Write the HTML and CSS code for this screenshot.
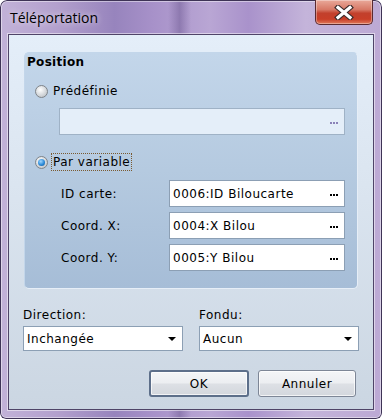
FILE: index.html
```html
<!DOCTYPE html>
<html lang="fr">
<head>
    <meta charset="UTF-8">
    <title>Téléportation</title>
    <link rel="stylesheet" href="styles.css">
</head>
<body>
    <div class="window">
        <div class="titlebar">
            <span class="title">Téléportation</span>
            <button class="close-btn" title="Fermer">
                <svg width="22" height="15" viewBox="0 0 22 15">
                    <path d="M5 2.5 L17 12.5 M17 2.5 L5 12.5" stroke="#3a2a2a" stroke-width="5.5" stroke-linecap="square"/>
                    <path d="M5 2.5 L17 12.5 M17 2.5 L5 12.5" stroke="#ffffff" stroke-width="3.2" stroke-linecap="square"/>
                </svg>
            </button>
        </div>

        <div class="client">
            <div class="group">
                <div class="group-title">Position</div>

                <label class="radio-row">
                    <span class="radio"></span>
                    <span class="radio-text">Prédéfinie</span>
                </label>
                <div class="field field-disabled predef">
                    <span class="field-value"></span>
                    <span class="dots"></span>
                </div>

                <label class="radio-row">
                    <span class="radio checked"></span>
                    <span class="radio-text focused">Par variable</span>
                </label>

                <div class="var-rows">
                    <div class="var-row">
                        <span class="var-label">ID carte:</span>
                        <div class="field">
                            <span class="field-value">0006:ID Biloucarte</span>
                            <span class="dots"></span>
                        </div>
                    </div>
                    <div class="var-row">
                        <span class="var-label">Coord. X:</span>
                        <div class="field">
                            <span class="field-value">0004:X Bilou</span>
                            <span class="dots"></span>
                        </div>
                    </div>
                    <div class="var-row">
                        <span class="var-label">Coord. Y:</span>
                        <div class="field">
                            <span class="field-value">0005:Y Bilou</span>
                            <span class="dots"></span>
                        </div>
                    </div>
                </div>
            </div>

            <div class="options">
                <div class="option">
                    <span class="option-label">Direction:</span>
                    <div class="select">
                        <span>Inchangée</span>
                        <span class="arrow"></span>
                    </div>
                </div>
                <div class="option">
                    <span class="option-label">Fondu:</span>
                    <div class="select">
                        <span>Aucun</span>
                        <span class="arrow"></span>
                    </div>
                </div>
            </div>

            <div class="actions">
                <button class="btn btn-default">OK</button>
                <button class="btn">Annuler</button>
            </div>
        </div>
    </div>
</body>
</html>
```

FILE: styles.css
```css
body {
    margin: 0;
    padding: 0;
    background: #ffffff;
    font-family: 'DejaVu Sans', Verdana, sans-serif;
    font-size: 12px;
    color: #000000;
}

.window {
    width: 382px;
    height: 419px;
    box-sizing: border-box;
    padding: 0 8px 9px 8px;
    border-radius: 7px 7px 6px 6px;
    background:
        linear-gradient(90deg, rgba(255,255,255,0) 0%, rgba(255,255,255,0) 44%, rgba(80,60,120,0.35) 47%, rgba(255,255,255,0) 50%, rgba(255,255,255,0) 100%),
        linear-gradient(90deg, #c2b2d8 0%, #b3a0cd 15%, #9784bd 30%, #a791c9 40%, #b9a6d4 55%, #a992cb 65%, #c4b4da 80%, #bca9d4 100%);
    box-shadow: inset 0 0 0 1px #3e3356, inset 0 0 0 2px rgba(255,255,255,0.45);
}

.titlebar {
    height: 34px;
    display: flex;
    align-items: flex-start;
}

.title {
    margin: 9px 0 0 2px;
    font-family: 'Open Sans', 'Noto Sans', sans-serif;
    font-size: 14px;
    line-height: 18px;
    color: #000000;
    text-shadow: 0 0 6px rgba(255,255,255,0.8);
}

.close-btn {
    margin-left: auto;
    margin-right: 1px;
    width: 58px;
    height: 25px;
    padding: 0;
    border: 1px solid #5a2a30;
    border-top: none;
    border-radius: 0 0 5px 5px;
    background: linear-gradient(180deg, #e9a99a 0%, #d77866 40%, #c2402c 55%, #c83e28 80%, #e07a5c 100%);
    box-shadow: inset 0 0 0 1px rgba(255,255,255,0.35);
    display: flex;
    justify-content: center;
    align-items: center;
}

.client {
    height: 376px;
    box-sizing: border-box;
    border: 1px solid #4f4468;
    padding: 17px 15px 0 15px;
    background: linear-gradient(180deg, #e4eef9 0%, #dbe5f0 40%, #cbd6e2 100%);
    box-shadow: 0 0 0 1px rgba(255,255,255,0.5);
}

.group {
    height: 237px;
    box-sizing: border-box;
    border: 1px solid #c3d6ea;
    border-right-color: #e6eef7;
    border-bottom-color: #e6eef7;
    border-radius: 5px;
    padding: 1px 0 17px 0;
    background: linear-gradient(180deg, #c3d6ea 0%, #b5cae0 50%, #a6bdd7 100%);
    display: flex;
    flex-direction: column;
}

.group-title {
    margin-left: 2px;
    font-weight: bold;
    line-height: 16px;
    letter-spacing: 0.3px;
}

.radio-row {
    display: flex;
    align-items: center;
    height: 18px;
    margin-top: 12px;
    margin-left: 10px;
}

.radio-row + .field {
    margin-top: 8px;
}

.field + .radio-row {
    margin-top: 18px;
}

.radio {
    width: 11px;
    height: 11px;
    border-radius: 50%;
    border: 1px solid #7f8489;
    background: radial-gradient(circle at 40% 35%, #ffffff 0%, #dcdfe2 45%, #b4b9be 100%);
    position: relative;
}

.radio.checked::after {
    content: "";
    position: absolute;
    left: 2px;
    top: 2px;
    width: 7px;
    height: 7px;
    border-radius: 50%;
    background: radial-gradient(circle at 40% 35%, #9fd6ff 0%, #2b8ad8 55%, #11508c 100%);
}

.radio-text {
    margin-left: 3px;
    padding: 0 1px;
    line-height: 16px;
    letter-spacing: 0.5px;
    border: 1px dotted transparent;
}

.radio-text.focused {
    border-color: #7a5a30;
}

.field {
    height: 27px;
    box-sizing: border-box;
    border: 1px solid #8c9fb4;
    background: #ffffff;
    display: flex;
    align-items: center;
    padding: 0 6px 0 3px;
}

.field.predef {
    width: 286px;
    margin-left: 34px;
    background: #e4eef9;
    border-color: #9fb2c6;
}

.field-value {
    flex: 1;
    letter-spacing: 0.5px;
    line-height: 16px;
}

.dots {
    width: 8px;
    height: 2px;
    margin-top: 3px;
    background-image: linear-gradient(90deg, #000000 2px, transparent 2px);
    background-size: 3px 2px;
}

.field-disabled .dots {
    background-image: linear-gradient(90deg, #8a82b8 2px, transparent 2px);
}

.var-rows {
    margin-top: 9px;
    display: flex;
    flex-direction: column;
    gap: 5px;
}

.var-row {
    display: flex;
    align-items: center;
    padding-left: 36px;
}

.var-label {
    width: 108px;
    letter-spacing: 0.5px;
}

.var-row .field {
    width: 176px;
}

.options {
    margin: 18px -1px 0 -1px;
    display: flex;
    gap: 16px;
}

.option {
    width: 160px;
    display: flex;
    flex-direction: column;
}

.option-label {
    line-height: 16px;
    letter-spacing: 0.5px;
}

.select {
    margin-top: 3px;
    height: 25px;
    box-sizing: border-box;
    border: 1px solid #8c9fb4;
    background: #ffffff;
    display: flex;
    align-items: center;
    justify-content: space-between;
    padding: 0 6px 0 3px;
    letter-spacing: 0.5px;
}

.arrow {
    width: 0;
    height: 0;
    border-left: 4px solid transparent;
    border-right: 4px solid transparent;
    border-top: 4px solid #000000;
}

.actions {
    margin: 19px 2px 0 0;
    display: flex;
    justify-content: flex-end;
    gap: 9px;
}

.btn {
    width: 98px;
    height: 27px;
    box-sizing: border-box;
    border: 1px solid #7d8696;
    border-radius: 3px;
    background: linear-gradient(180deg, #f4f5f7 0%, #eceef1 48%, #dde0e5 52%, #d3d7dd 100%);
    box-shadow: inset 0 0 0 1px rgba(255,255,255,0.7);
    font-family: 'DejaVu Sans', Verdana, sans-serif;
    font-size: 12px;
    letter-spacing: 0.5px;
    color: #000000;
    padding: 0;
}

.btn-default {
    width: 100px;
    border: 2px solid #5d6f8a;
}
```
